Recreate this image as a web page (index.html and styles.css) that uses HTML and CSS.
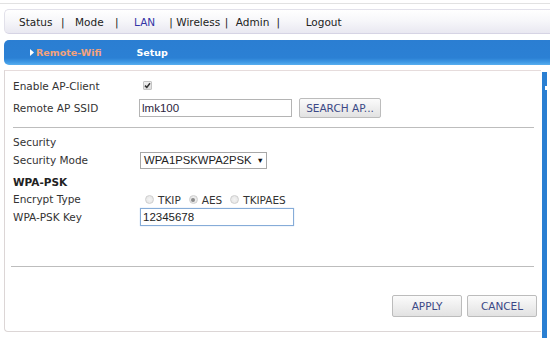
FILE: index.html
```html
<!DOCTYPE html>
<html>
<head>
<meta charset="utf-8">
<link rel="stylesheet" href="styles.css">
</head>
<body>
<div class="topline"></div>
<div class="nav">
  <span class="n1">Status</span><span class="bar b1">|</span>
  <span class="n2">Mode</span><span class="bar b2">|</span>
  <span class="n3 active">LAN</span><span class="bar b3">|</span>
  <span class="n4">Wireless</span><span class="bar b4">|</span>
  <span class="n5">Admin</span><span class="bar b5">|</span>
  <span class="n6">Logout</span>
</div>
<div class="subnav">
  <span class="crumb"><svg class="tri" width="4" height="7" viewBox="0 0 4 7"><path d="M0 0 L4 3.5 L0 7 Z" fill="#fff"/></svg>Remote-Wifi</span>
  <span class="page">Setup</span>
</div>
<div class="main">
  <div class="panel">
    <div class="row r1">
      <span class="label">Enable AP-Client</span>
      <span class="check"><svg width="7" height="7" viewBox="0 0 7 7"><path d="M1 3.6 L2.8 5.4 L6 1.2" fill="none" stroke="#333" stroke-width="1.5"/></svg></span>
    </div>
    <div class="row r2">
      <span class="label">Remote AP SSID</span>
      <span class="input ssid">lmk100</span>
      <span class="btn search">SEARCH AP...</span>
    </div>
    <div class="hr hr1"></div>
    <div class="row r3"><span class="label">Security</span></div>
    <div class="row r4">
      <span class="label">Security Mode</span>
      <span class="select"><span>WPA1PSKWPA2PSK</span><span class="arrow">&#9660;</span></span>
    </div>
    <div class="row r5"><span class="label bold">WPA-PSK</span></div>
    <div class="row r6">
      <span class="label">Encrypt Type</span>
      <span class="radios">
        <span class="radio"></span><span class="rl">TKIP</span>
        <span class="radio on"></span><span class="rl">AES</span>
        <span class="radio"></span><span class="rl">TKIPAES</span>
      </span>
    </div>
    <div class="row r7">
      <span class="label">WPA-PSK Key</span>
      <span class="input key">12345678</span>
    </div>
    <div class="hr hr2"></div>
    <div class="actions">
      <span class="btn act">APPLY</span>
      <span class="btn act">CANCEL</span>
    </div>
  </div>
  <div class="strip"><span class="notch"></span></div>
</div>
</body>
</html>
```
FILE: styles.css
```css
* { box-sizing: border-box; }
html, body { margin: 0; padding: 0; background: #fff; }
body {
  width: 550px;
  height: 338px;
  overflow: hidden;
  font-family: "DejaVu Sans", Verdana, sans-serif;
  font-size: 10.5px;
  color: #333;
}
.topline {
  margin-top: 3px;
  height: 1px;
  background: #e2e2e2;
}
.nav {
  margin-top: 5px;
  margin-left: 4px;
  height: 25px;
  display: flex;
  align-items: center;
  padding-left: 14px;
  border: 1px solid #e2e1ea;
  border-right: none;
  border-bottom-color: #d6d4e4;
  border-radius: 5px 0 0 5px;
  background: linear-gradient(to bottom, #ffffff 0%, #f7f7fa 45%, #e9e8f1 100%);
  color: #222;
  white-space: nowrap;
}
.nav .active { color: #3434a6; }
.nav .bar { color: #222; }
.b1 { margin-left: 8.5px; }
.n2 { margin-left: 10.5px; }
.b2 { margin-left: 11.4px; }
.n3 { margin-left: 15.5px; }
.b3 { margin-left: 14px; }
.n4 { margin-left: 3.5px; }
.b4 { margin-left: 4.6px; }
.n5 { margin-left: 7.5px; }
.b5 { margin-left: 7.3px; }
.n6 { margin-left: 25.5px; }

.subnav {
  margin-top: 6px;
  margin-left: 4px;
  height: 25px;
  display: flex;
  align-items: center;
  padding-left: 26px;
  border-radius: 5px 0 0 5px;
  background: linear-gradient(to bottom, #2b7ed2 0%, #2b80d4 72%, #3d98e4 88%, #58aeef 100%);
  font-weight: bold;
  font-size: 9.5px;
}
.crumb {
  color: #f3a27c;
  display: flex;
  align-items: center;
}
.tri { margin-right: 2px; }
.page { color: #fff; margin-left: 35px; }

.main {
  display: flex;
  align-items: flex-start;
}
.panel {
  margin-top: 5px;
  margin-left: 4px;
  width: 537px;
  height: 262px;
  border: 1px solid #dcd6d6;
  border-right: none;
  border-top-color: #e6dcdc;
  border-radius: 0 0 0 4px;
  padding-left: 8px;
  padding-right: 4px;
  padding-top: 6px;
}
.strip {
  margin-top: 7px;
  margin-left: 1px;
  width: 5px;
  height: 266px;
  background: #2a7fd2;
  position: relative;
}
.notch {
  position: absolute;
  left: 3px;
  top: 14px;
  width: 2px;
  height: 4px;
  background: #fff;
}

.row {
  display: flex;
  align-items: center;
}
.label {
  width: 126px;
  flex: none;
  color: #333;
}
.label.bold { font-weight: bold; color: #222; }
.r1 { height: 18px; }
.r2 { height: 20px; margin-top: 3px; }
.hr {
  height: 1px;
  background: #bdbdbd;
  margin-right: 3px;
}
.hr1 { margin-top: 9px; }
.r3 { height: 16px; margin-top: 6px; }
.r4 { height: 18px; margin-top: 1px; }
.r5 { height: 18px; margin-top: 4px; }
.r6 { height: 16px; }
.r7 { height: 18px; margin-top: 1px; }
.hr2 { margin-top: 40px; margin-left: -2px; }

.check {
  margin-left: 4px;
  margin-top: -1px;
  width: 9px;
  height: 9px;
  border: 1px solid #c4c4c4;
  border-radius: 1px;
  background: linear-gradient(#f0f0f0, #dcdcdc);
  display: flex;
  align-items: center;
  justify-content: center;
}
.input {
  display: flex;
  align-items: center;
  height: 18px;
  border: 1px solid #b4b4b4;
  padding-left: 2px;
  font-family: "Liberation Sans", Arial, sans-serif;
  font-size: 11.5px;
  color: #2c2540;
  background: #fff;
}
.ssid { width: 153px; }
.key {
  width: 154px;
  margin-left: 1px;
  border-color: #86acd8;
  box-shadow: 0 0 1px #a9c8ec;
  color: #222;
}
.btn {
  display: flex;
  align-items: center;
  justify-content: center;
  border: 1px solid #bcbcbc;
  border-radius: 2px;
  background: linear-gradient(#fbfbfb, #ececec 60%, #e2e2e2);
  color: #3a4886;
}
.search {
  margin-left: 7px;
  width: 82px;
  height: 20px;
}
.select {
  margin-left: 1px;
  width: 127px;
  height: 17px;
  border: 1px solid #a8a8a8;
  display: flex;
  align-items: center;
  padding-left: 3px;
  font-family: "Liberation Sans", Arial, sans-serif;
  font-size: 11.3px;
  color: #222;
}
.arrow {
  font-size: 7.5px;
  margin-left: 5px;
  color: #111;
}
.radios {
  display: flex;
  align-items: center;
  margin-top: 1px;
}
.radio {
  width: 9px;
  height: 9px;
  border-radius: 50%;
  border: 1px solid #cfcfcf;
  background: radial-gradient(circle, #f4f4f4, #e2e2e2);
  margin-left: 8px;
  display: flex;
  align-items: center;
  justify-content: center;
}
.radio:first-child { margin-left: 6px; }
.radio.on::after {
  content: "";
  width: 4px;
  height: 4px;
  border-radius: 50%;
  background: #8a8a8a;
}
.rl { margin-left: 4px; }

.actions {
  display: flex;
  justify-content: flex-end;
  gap: 5px;
  margin-top: 28px;
  padding-right: 0;
}
.act {
  width: 70px;
  height: 22px;
}
```
